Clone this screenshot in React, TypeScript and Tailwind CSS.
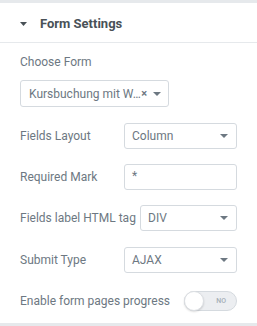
import { useState } from "react";

function Caret() {
  return (
    <svg width="8" height="4" viewBox="0 0 8 4" className="shrink-0">
      <path d="M0 0h8L4 4z" fill="#6d7882" />
    </svg>
  );
}

function SelectBox({ value }: { value: string }) {
  return (
    <div className="flex h-[26px] flex-1 items-center justify-between rounded-[3px] border border-[#d5dadf] bg-white pl-[7px] pr-[8px] text-[12px] text-[#6d7882]">
      <span>{value}</span>
      <Caret />
    </div>
  );
}

function Row({ label, children }: { label: string; children: React.ReactNode }) {
  return (
    <div className="flex h-[26px] items-center">
      <div className="mr-[4px] shrink-0 text-[12px] text-[#6d7882]">{label}</div>
      {children}
    </div>
  );
}

export default function App() {
  const [progress, setProgress] = useState(false);

  return (
    <div
      className="flex h-[326px] w-[257px] flex-col bg-[#e6e9ec] py-[3px]"
      style={{ fontFamily: "Roboto, 'Liberation Sans', sans-serif" }}
    >
      <div className="flex flex-1 flex-col bg-white">
        {/* Section header */}
        <div className="flex h-[40px] items-center border-b border-[#e6e9ec] pl-[20px] pt-[2px]">
          <svg width="7" height="4" viewBox="0 0 7 4" className="mr-[13px]">
            <path d="M0 0h7L3.5 4z" fill="#495157" />
          </svg>
          <span className="text-[13px] font-bold text-[#495157]">Form Settings</span>
        </div>

        <div className="flex flex-col px-[20px] pt-[12px]">
          <div className="text-[12px] leading-[15px] text-[#6d7882]">Choose Form</div>
          <div className="mt-[10px] flex h-[27px] w-[149px] items-center rounded-[3px] border border-[#d5dadf] bg-white pl-[8px] pr-[7px] text-[12px] text-[#6d7882]">
            <span className="whitespace-nowrap">Kursbuchung mit W…</span>
            <span className="ml-auto text-[11px] font-bold leading-none text-[#6d7882]">×</span>
            <span className="ml-[6px]">
              <Caret />
            </span>
          </div>

          <div className="mt-[16px] flex flex-col gap-[15px]">
            <Row label="Fields Layout">
              <div className="ml-auto flex w-[113px]">
                <SelectBox value="Column" />
              </div>
            </Row>
            <Row label="Required Mark">
              <div className="ml-auto flex h-[26px] w-[113px] items-start rounded-[3px] border border-[#d5dadf] bg-white pl-[7px] pt-[5px] text-[12px] leading-[12px] text-[#6d7882]">
                *
              </div>
            </Row>
            <Row label="Fields label HTML tag">
              <div className="ml-auto flex w-[97px]">
                <SelectBox value="DIV" />
              </div>
            </Row>
            <div className="mt-[1px]">
              <Row label="Submit Type">
                <div className="ml-auto flex w-[113px]">
                  <SelectBox value="AJAX" />
                </div>
              </Row>
            </div>
            <Row label="Enable form pages progress">
              <button
                onClick={() => setProgress(!progress)}
                className="relative ml-auto flex h-[20px] w-[53px] items-center rounded-full border border-[#d5dadf] bg-[#eceef1]"
              >
                <span className="absolute left-[-1px] top-[-1px] h-[20px] w-[20px] rounded-full border border-[#dcdfe3] bg-white shadow-[0_1px_2px_rgba(0,0,0,0.15)]" />
                <span className="ml-auto mr-[10px] text-[7px] font-medium text-[#a4afb7]">NO</span>
              </button>
            </Row>
          </div>
        </div>
      </div>
    </div>
  );
}
